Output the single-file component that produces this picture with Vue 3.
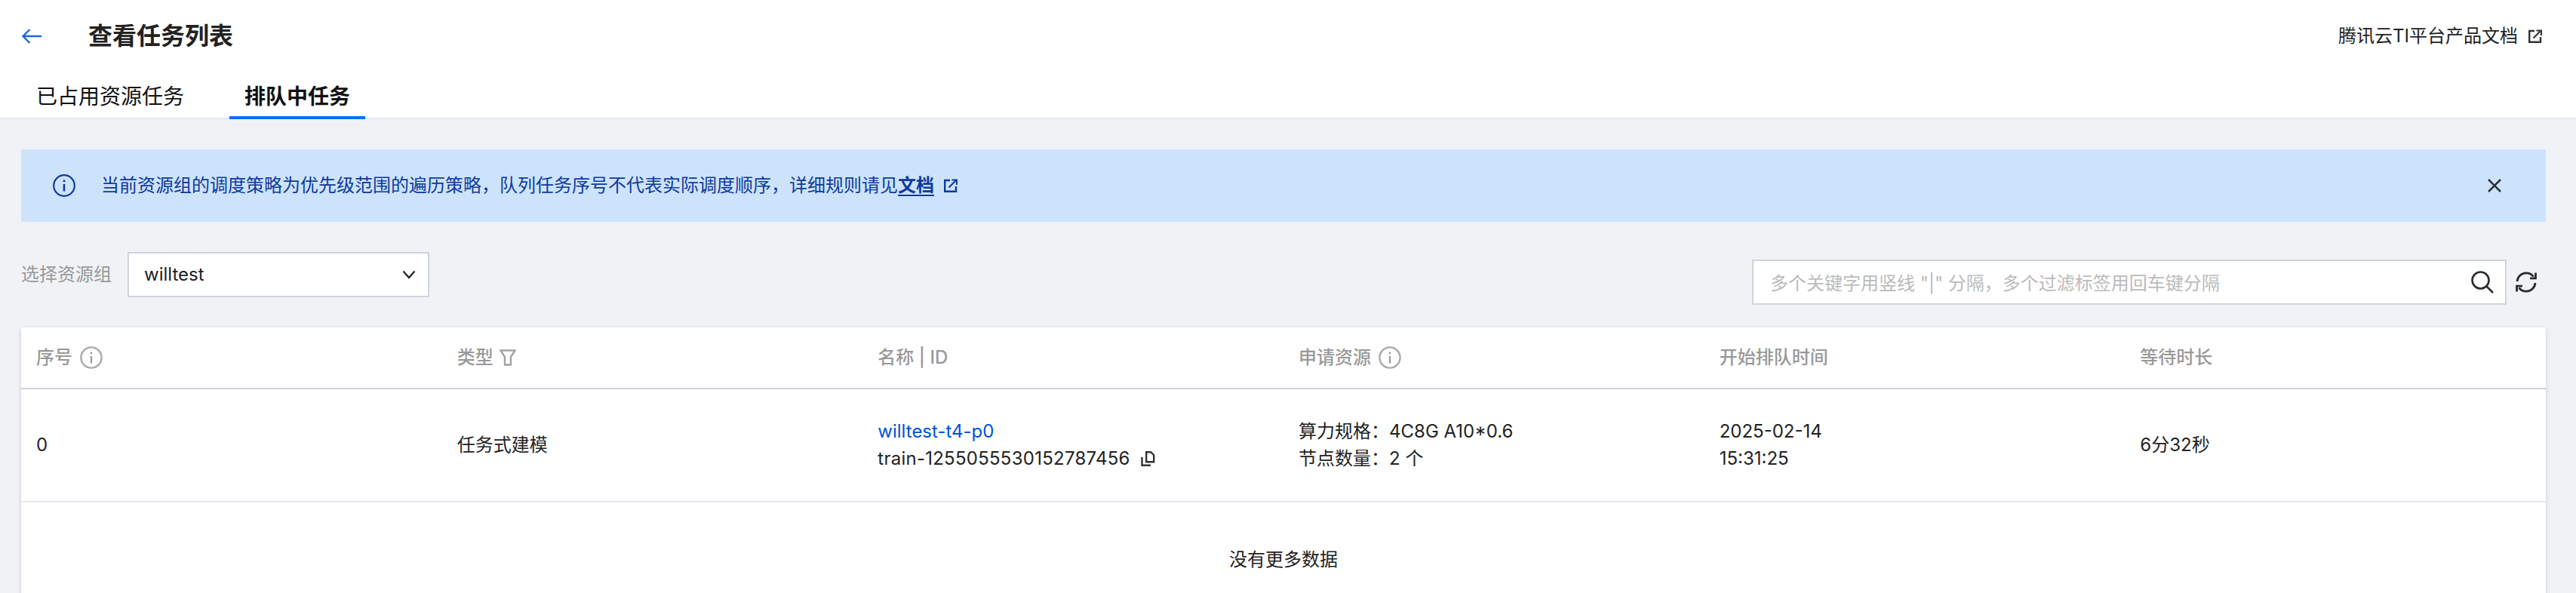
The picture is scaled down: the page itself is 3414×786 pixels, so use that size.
<script setup>
const cols = [
  { label: '序号', icon: 'info' },
  { label: '类型', icon: 'filter' },
  { label: '名称 | ID' },
  { label: '申请资源', icon: 'info' },
  { label: '开始排队时间' },
  { label: '等待时长' }
]
</script>

<template>
  <div class="page">
    <header class="head">
      <div class="head-top">
        <div class="head-left">
          <svg class="back" viewBox="0 0 26 20" fill="none" stroke="#1f66dc" stroke-width="2.4">
            <path d="M1.500 10H26M10.500 1L1.500 10l9 9" />
          </svg>
          <h1 class="title">查看任务列表</h1>
        </div>
        <div class="doc">
          <span>腾讯云TI平台产品文档</span>
          <svg class="ext" viewBox="0 0 18 18" fill="none" stroke="#333" stroke-width="2.400">
            <path d="M8 2H1.200v14.800H16V10" />
            <path d="M6.500 11.500L15.500 2.500M10.500 1.500h6.500v6.500" stroke-width="2.200" />
          </svg>
        </div>
      </div>
      <nav class="tabs">
        <div class="tab">已占用资源任务</div>
        <div class="tab active">排队中任务</div>
      </nav>
    </header>

    <main class="body">
      <section class="alert">
        <svg class="alert-icon" viewBox="0 0 30 30" fill="none" stroke="#0e3a9e" stroke-width="2.200">
          <circle cx="15" cy="15" r="13.800" />
          <path d="M15 13v9.500" stroke-width="2.600" />
          <path d="M15 7.500v2.800" stroke-width="2.600" />
        </svg>
        <p class="alert-text">
          当前资源组的调度策略为优先级范围的遍历策略，队列任务序号不代表实际调度顺序，详细规则请见<a class="alert-link">文档</a>
          <svg class="ext alert-ext" viewBox="0 0 18 18" fill="none" stroke="#0e3a9e" stroke-width="2.400">
            <path d="M8 2H1.200v14.800H16V10" />
            <path d="M6.500 11.500L15.500 2.500M10.500 1.500h6.500v6.500" stroke-width="2.200" />
          </svg>
        </p>
        <svg class="close" viewBox="0 0 18 18" fill="none" stroke="#2b2f36" stroke-width="2.600">
          <path d="M1 1l16 16M17 1L1 17" />
        </svg>
      </section>

      <section class="filters">
        <div class="filter-left">
          <label class="filter-label">选择资源组</label>
          <div class="select">
            <span>willtest</span>
            <svg class="chevron" viewBox="0 0 18 12" fill="none" stroke="#222" stroke-width="2.200">
              <path d="M1.500 1.500L9 10l7.500-8.500" />
            </svg>
          </div>
        </div>
        <div class="filter-right">
          <div class="search">
            <span class="placeholder">多个关键字用竖线 "|" 分隔，多个过滤标签用回车键分隔</span>
            <svg class="search-icon" viewBox="0 0 30 30" fill="none" stroke="#2b2b2b" stroke-width="2.600">
              <circle cx="12.500" cy="12.500" r="11" />
              <path d="M20.500 20.500L29 29" />
            </svg>
          </div>
          <svg class="refresh" viewBox="0 0 28 28" fill="none" stroke="#2b2b2b" stroke-width="2.800">
            <path d="M2 13C2.600 6.600 7.600 1.800 14 1.800c4 0 7.400 1.800 9.600 4.800" />
            <path d="M26 15c-.6 6.400-5.600 11.200-12 11.200-4 0-7.400-1.800-9.600-4.800" />
            <path d="M26.500 1.500v7.400h-7.400" />
            <path d="M1.500 26.500v-7.400h7.400" />
          </svg>
        </div>
      </section>

      <section class="table">
        <div class="row row-head">
          <div v-for="c in cols" :key="c.label" class="cell head-cell">
            <span>{{ c.label }}</span>
            <svg v-if="c.icon === 'info'" class="th-info" viewBox="0 0 30 30" fill="none" stroke="#aaa" stroke-width="2.400">
              <circle cx="15" cy="15" r="13.600" />
              <path d="M15 13v9.500M15 7.500v2.800" stroke="#999" stroke-width="2.200" />
            </svg>
            <svg v-if="c.icon === 'filter'" class="th-filter" viewBox="0 0 22 22" fill="none" stroke="#a3a3a3" stroke-width="2.400">
              <path d="M1.500 1.500h19L15 10v10.500H7V10z" />
            </svg>
          </div>
        </div>
        <div class="row row-body">
          <div class="cell">0</div>
          <div class="cell">任务式建模</div>
          <div class="cell">
            <div class="stack">
              <a class="name">willtest-t4-p0</a>
              <div class="id-line">
                <span class="id-text">train-1255055530152787456</span>
                <svg class="copy" viewBox="0 0 19 20" fill="none" stroke="#333" stroke-width="2.400">
                  <path d="M7.200 1.200h6l4 4v9h-10z" />
                  <path d="M1.500 8v10.800H13" />
                </svg>
              </div>
            </div>
          </div>
          <div class="cell">
            <div class="stack">
              <div>算力规格：4C8G A10*0.6</div>
              <div>节点数量：2 个</div>
            </div>
          </div>
          <div class="cell">
            <div class="stack">
              <div>2025-02-14</div>
              <div>15:31:25</div>
            </div>
          </div>
          <div class="cell">6分32秒</div>
        </div>
        <div class="no-more">没有更多数据</div>
      </section>
    </main>
  </div>
</template>

<style scoped>
.page {
  height: 786px;
  overflow: hidden;
  background: #f0f2f6;
  font-family: Inter, "Liberation Sans", "Noto Sans CJK SC", sans-serif;
  font-size: 24px;
  line-height: 36px;
  color: #222;
}
.head {
  background: #fff;
  border-bottom: 2px solid #e5e8ef;
  height: 158px;
  box-sizing: border-box;
}
.head-top {
  height: 96px;
  display: flex;
  align-items: center;
  justify-content: space-between;
  padding: 0 45px 0 29px;
}
.head-left {
  display: flex;
  align-items: center;
  gap: 62px;
}
.back {
  width: 26px;
  height: 20px;
  display: block;
}
.title {
  margin: 0;
  font-size: 32px;
  line-height: 44px;
  font-weight: 600;
  color: #222;
}
.doc {
  display: flex;
  align-items: center;
  gap: 14px;
}
.ext {
  width: 18px;
  height: 18px;
  display: block;
  flex: none;
}
.tabs {
  display: flex;
  gap: 40px;
  padding-left: 28px;
}
.tab {
  padding: 0 20px;
  height: 60px;
  box-sizing: border-box;
  font-size: 28px;
  line-height: 64px;
  color: #111;
}
.tab.active {
  font-weight: 600;
  height: 62px;
  border-bottom: 4px solid #006eff;
}
.body {
  padding: 40px 40px 0 28px;
}
.alert {
  height: 96px;
  background: #cde3fc;
  display: flex;
  align-items: center;
  padding: 0 59px 0 42px;
  color: #0e3a9e;
}
.alert-icon {
  width: 30px;
  height: 30px;
  flex: none;
  margin-right: 34px;
}
.alert-text {
  margin: 0;
  flex: 1;
  display: flex;
  align-items: center;
}
.alert-link {
  font-weight: 600;
  text-decoration: underline;
  text-underline-offset: 4px;
}
.alert-ext {
  margin-left: 13px;
}
.close {
  width: 18px;
  height: 18px;
  flex: none;
}
.filters {
  display: flex;
  justify-content: space-between;
  align-items: flex-start;
  margin-top: 40px;
  height: 100px;
}
.filter-left {
  display: flex;
  align-items: center;
  gap: 21px;
}
.filter-label {
  color: #999;
}
.select {
  width: 400px;
  height: 60px;
  box-sizing: border-box;
  border: 2px solid #cfd5de;
  background: #fff;
  display: flex;
  align-items: center;
  justify-content: space-between;
  padding: 0 16px 0 20px;
}
.chevron {
  width: 18px;
  height: 12px;
}
.filter-right {
  display: flex;
  align-items: center;
  gap: 12px;
  margin: 10px 12px 0 0;
}
.search {
  width: 1000px;
  height: 60px;
  box-sizing: border-box;
  border: 2px solid #cfd5de;
  background: #fff;
  display: flex;
  align-items: center;
  justify-content: space-between;
  padding: 0 15px 0 22px;
}
.placeholder {
  color: #bbb;
  position: relative;
  top: 2px;
}
.search-icon {
  width: 30px;
  height: 30px;
  flex: none;
}
.refresh {
  width: 28px;
  height: 28px;
  flex: none;
}
.table {
  background: #fff;
  box-shadow: 0 2px 6px rgba(54, 58, 80, 0.2);
}
.row {
  display: grid;
  grid-template-columns: repeat(6, 1fr);
}
.row-head {
  height: 82px;
  box-sizing: border-box;
  border-bottom: 2px solid #cfd2dc;
}
.row-body {
  height: 150px;
  box-sizing: border-box;
  border-bottom: 2px solid #e5e8ef;
}
.cell {
  padding: 0 20px;
  display: flex;
  align-items: center;
  min-width: 0;
}
.head-cell {
  color: #999;
  font-weight: 500;
  gap: 10px;
}
.th-info {
  width: 30px;
  height: 30px;
  flex: none;
}
.th-filter {
  width: 22px;
  height: 22px;
  flex: none;
  margin-left: -2px;
}
.name {
  color: #0052d9;
}
.id-line {
  display: flex;
  align-items: center;
  gap: 14px;
}
.id-text {
  letter-spacing: 0.25px;
}
.copy {
  width: 19px;
  height: 20px;
  flex: none;
}
.no-more {
  height: 152px;
  display: flex;
  align-items: center;
  justify-content: center;
}
</style>

<style>
html, body {
  margin: 0;
  overflow: hidden;
}
</style>
